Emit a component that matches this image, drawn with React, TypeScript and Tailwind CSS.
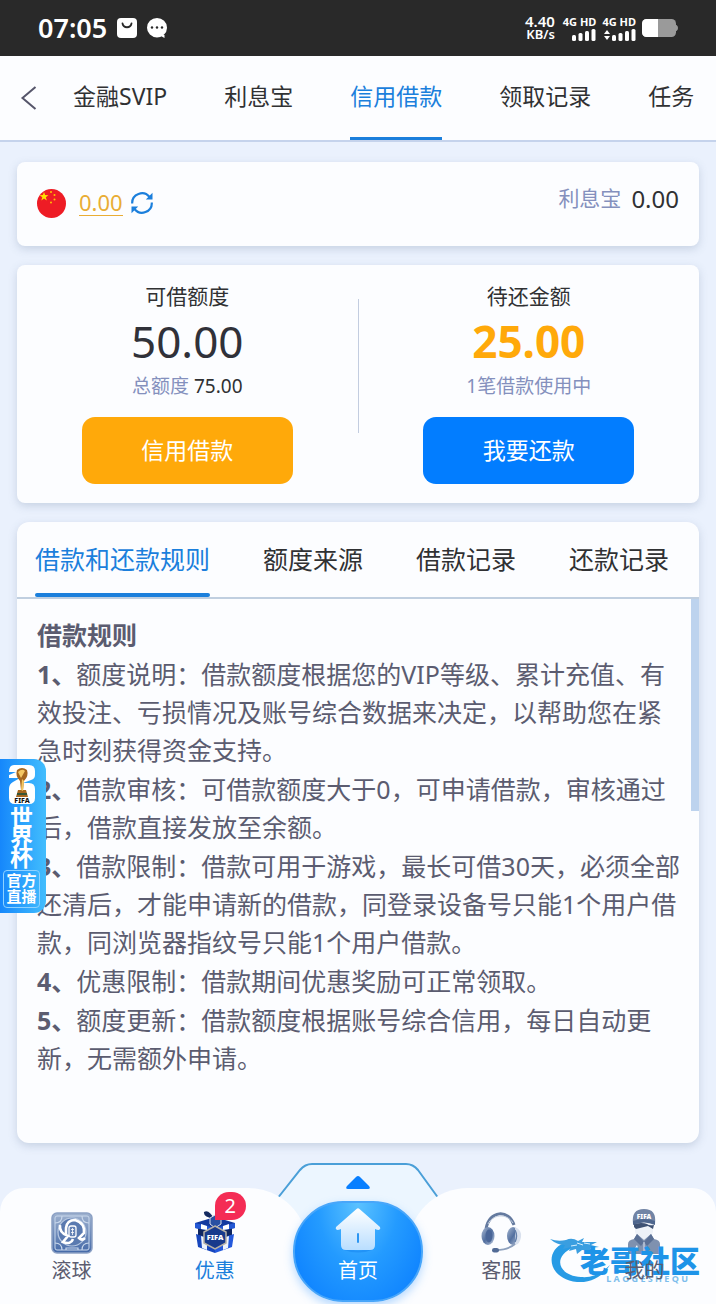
import React from 'react';

const headerTabs = ['金融SVIP', '利息宝', '信用借款', '领取记录', '任务'];
const ruleTabs = ['借款和还款规则', '额度来源', '借款记录', '还款记录'];
const rules = [
  '额度说明：借款额度根据您的VIP等级、累计充值、有效投注、亏损情况及账号综合数据来决定，以帮助您在紧急时刻获得资金支持。',
  '借款审核：可借款额度大于0，可申请借款，审核通过后，借款直接发放至余额。',
  '借款限制：借款可用于游戏，最长可借30天，必须全部还清后，才能申请新的借款，同登录设备号只能1个用户借款，同浏览器指纹号只能1个用户借款。',
  '优惠限制：借款期间优惠奖励可正常领取。',
  '额度更新：借款额度根据账号综合信用，每日自动更新，无需额外申请。',
];

function Signal({ arrows = false }: { arrows?: boolean }) {
  return (
    <div className="flex flex-col items-end gap-px">
      <span className="text-[11px] leading-[13px] font-bold whitespace-nowrap">4G HD</span>
      <svg width="32" height="12" viewBox="0 0 32 12" fill="#fff">
        {arrows && <path d="M0 5 3 1 6 5ZM0 7h6L3 11Z" />}
        <rect x="8" y="6" width="4" height="6" rx="1.5" />
        <rect x="14.500" y="4" width="4" height="8" rx="1.500" />
        <rect x="21" y="2" width="4" height="10" rx="1.500" />
        <rect x="27.500" y="0" width="4" height="12" rx="1.500" />
      </svg>
    </div>
  );
}

function StatusBar() {
  return (
    <div className="flex h-14 items-center bg-[#292929] px-[38px] text-white">
      <span className="text-[27px] leading-8 font-semibold">07:05</span>
      <svg className="ml-[10px]" width="20" height="20" viewBox="0 0 20 20">
        <rect width="20" height="20" rx="4" fill="#fff" />
        <path d="M5.500 5.500c1 5 8 5 9 0" fill="none" stroke="#292929" strokeWidth="1.800" strokeLinecap="round" />
      </svg>
      <svg className="ml-[10px]" width="20" height="20" viewBox="0 0 20 20">
        <path d="M10 0a10 9.700 0 1 1 0 19.400A10 9.700 0 0 1 10 0Z" fill="#fff" />
        <path d="M12 17h5.500v3Z" fill="#fff" />
        <g fill="#292929"><circle cx="5" cy="9.500" r="1.200" /><circle cx="10" cy="9.500" r="1.200" /><circle cx="15" cy="9.500" r="1.200" /></g>
      </svg>
      <div className="ml-auto flex flex-col items-end font-semibold">
        <span className="text-[15px] leading-[13px]">4.40</span>
        <span className="text-[13px] leading-[13px]">KB/s</span>
      </div>
      <div className="ml-2 flex gap-[6px]">
        <Signal />
        <Signal arrows />
      </div>
      <svg className="ml-[6px]" width="36" height="18" viewBox="0 0 36 18">
        <path d="M33.500 6h1q1.500 1 1.500 3t-1.500 3h-1Z" fill="#9a9a9a" />
        <rect width="34" height="18" rx="4.500" fill="#9a9a9a" />
        <path d="M4.500 0H16v18H4.500A4.500 4.500 0 0 1 0 13.500v-9A4.500 4.500 0 0 1 4.500 0Z" fill="#fff" />
      </svg>
    </div>
  );
}

function Header() {
  return (
    <header className="flex h-[86px] border-b-2 border-[#c5d3ec] bg-[#fcfdff]">
      <button aria-label="返回" className="flex w-[73px] shrink-0 items-center pl-5">
        <svg width="18" height="24" viewBox="0 0 18 24" fill="none" stroke="#55556a" strokeWidth="2">
          <path d="M15.500 1 2.500 12l13 11" />
        </svg>
      </button>
      <nav className="flex min-w-0 flex-1 gap-[57px] overflow-hidden">
        {headerTabs.map((tab, i) => (
          <a
            key={tab}
            href="#"
            className={
              i === 2
                ? 'flex shrink-0 items-center border-b-[3px] border-[#1b7fdc] text-[23px] text-[#1b7fdc]'
                : 'flex shrink-0 items-center border-b-[3px] border-transparent text-[23px] text-[#303133]'
            }
          >
            {tab}
          </a>
        ))}
      </nav>
    </header>
  );
}

function ChinaFlag() {
  return (
    <svg width="29" height="29" viewBox="0 0 29 29">
      <circle cx="14.500" cy="14.500" r="14.500" fill="#ee1c25" />
      <path d="m7 3 1.100 3.100 3.300.1-2.600 2 1 3.200L7 9.500l-2.700 1.900 1-3.200-2.700-2 3.300-.1Z" fill="#ffde00" />
      <g fill="#ffc400"><circle cx="14" cy="3" r="1" /><circle cx="17.500" cy="6" r="1" /><circle cx="17.500" cy="10.500" r="1" /><circle cx="14" cy="13.500" r="1" /></g>
    </svg>
  );
}

function BalanceCard() {
  return (
    <section className="flex h-[84px] items-center rounded-lg bg-[#fcfdff] px-5 pb-[2px] shadow-[0_3px_8px_rgba(120,140,170,0.3)]">
      <ChinaFlag />
      <span className="ml-[13px] border-b border-[#e9ad35] text-[22px] leading-[25px] text-[#e9ad35]">0.00</span>
      <button aria-label="刷新余额" className="ml-2">
        <svg width="22" height="22" viewBox="0 0 22 22" fill="none" stroke="#1b7fdc" strokeWidth="2.200">
          <path d="M1.200 11.500A9.700 9.700 0 0 1 18.500 5M20.800 10.500A9.700 9.700 0 0 1 3.500 17" />
          <path d="M21.500.800v6.700h-6.700ZM.500 21.200v-6.700h6.700Z" fill="#1b7fdc" stroke="none" />
        </svg>
      </button>
      <div className="mb-2 ml-auto flex items-center gap-[10px]">
        <span className="text-[21px] text-[#8490bd]">利息宝</span>
        <span className="text-[24px] leading-8 text-[#303133]">0.00</span>
      </div>
    </section>
  );
}

function LoanCard() {
  return (
    <section className="mt-[19px] flex h-[238px] rounded-lg bg-[#fcfdff] pt-[18px] shadow-[0_3px_8px_rgba(120,140,170,0.3)]">
      <div className="flex flex-1 flex-col items-center">
        <h2 className="text-[21px] leading-[26px] text-[#303133]">可借额度</h2>
        <p className="text-[44px] leading-[65px] text-[#303139]">50.00</p>
        <p className="text-[19px] leading-6 text-[#303133]">
          <span className="text-[#8490bd]">总额度</span> 75.00
        </p>
        <button className="mt-[19px] h-[67px] w-[211px] rounded-[13px] bg-[#ffa90a] text-[23px] text-white">信用借款</button>
      </div>
      <div className="mt-4 h-[134px] w-px bg-[#c3cde0]" />
      <div className="flex flex-1 flex-col items-center">
        <h2 className="text-[21px] leading-[26px] text-[#303133]">待还金额</h2>
        <p className="text-[44px] leading-[65px] font-bold text-[#ffa90a]">25.00</p>
        <p className="text-[19px] leading-6 text-[#8490bd]">1笔借款使用中</p>
        <button className="mt-[19px] h-[67px] w-[211px] rounded-[13px] bg-[#027dff] text-[23px] text-white">我要还款</button>
      </div>
    </section>
  );
}

function RulesCard() {
  return (
    <section className="mt-[19px] rounded-xl bg-[#fcfdff] pb-[66px] shadow-[0_3px_8px_rgba(120,140,170,0.3)]">
      <nav className="flex h-[77px] gap-[53px] border-b-2 border-[#c0cfe0] pl-[18px]">
        {ruleTabs.map((tab, i) => (
          <button
            key={tab}
            className={
              i === 0
                ? 'relative shrink-0 text-[25px] text-[#1b7fdc] after:absolute after:inset-x-0 after:bottom-0 after:h-1 after:rounded-sm after:bg-[#1b7fdc]'
                : 'shrink-0 text-[25px] text-[#303133]'
            }
          >
            {tab}
          </button>
        ))}
      </nav>
      <div className="relative pt-[17px] pr-[17px] pl-5 text-[25px] leading-[38px] text-[#5b5c70]">
        <div className="absolute top-0 right-0 h-[212px] w-2 bg-[#bdd3ee]" />
        <h3 className="font-bold">借款规则</h3>
        {rules.map((rule, i) => (
          <p key={rule} className="mt-px">
            <b>{i + 1}、</b>
            {rule}
          </p>
        ))}
      </div>
    </section>
  );
}

function WorldCupTag() {
  return (
    <a
      href="#"
      className="absolute top-[759px] left-0 flex h-[154px] w-[46px] flex-col items-center rounded-r-xl bg-linear-to-r from-[#1687fb] to-[#42bdfd] pt-[6px] pr-[3px] text-white"
    >
      <svg width="28" height="40" viewBox="0 0 28 40">
        <path d="M6 0h15q6 0 6 6v4q0 4-4 5l-8 3h6q6 0 6 6v9q0 6-6 6H7q-6 0-6-6V24q0-5 4-7l7-4H1v-3l7-3H1q0-7 5-7Z" fill="#fff" />
        <path d="M9 5q5-4 10 0 2 6-3 11l-1 9h3l2 7H8l2-7h3l-1-9Q7 11 9 5Z" fill="#a5661f" />
        <path d="M10 7q4-4 7-1l-4 7ZM14 14l2 2-1 10-2-1Z" fill="#f4c763" />
        <path d="M9 28h10v2H9Z" fill="#375536" />
        <text x="14" y="38" textAnchor="middle" fontSize="7" fontWeight="800" fill="#111">FIFA</text>
      </svg>
      <span className="mt-[2px] w-6 text-center text-[23px] leading-[20px] font-bold">世界杯</span>
      <span className="mt-[3px] rounded-sm border border-[#8ed2ff] px-[2px] pt-px pb-[3px] text-center text-[15px] leading-4 font-bold">
        官方
        <br />
        直播
      </span>
    </a>
  );
}

function BallIcon() {
  return (
    <svg width="42" height="42" viewBox="0 0 42 42">
      <defs>
        <linearGradient id="ball" x1="0" y1="0" x2="0" y2="1">
          <stop offset="0" stopColor="#9fb2cf" />
          <stop offset="1" stopColor="#4469a8" />
        </linearGradient>
      </defs>
      <rect x="1" y="1" width="40" height="40" rx="5" fill="url(#ball)" stroke="#8ca1c5" strokeWidth="1.500" />
      <rect x="4" y="4" width="34" height="34" rx="2" fill="none" stroke="#c9d8ec" />
      <path d="M4 11q7 0 7-7M38 11q-7 0-7-7M4 31q7 0 7 7M38 31q-7 0-7 7M15 38v-2h12v2" fill="none" stroke="#c9d8ec" strokeWidth="1.200" />
      <circle cx="21" cy="20" r="14" fill="#5a7ab0" stroke="#b9cae3" strokeWidth="1.200" />
      <path d="M9 13q-1 8 8 11l-5 6q8 3 10-3M15 24V16q1-8 9-8 10 3 9 13l-5 5q3 3 6 0" fill="none" stroke="#fff" strokeWidth="2.600" />
      <rect x="18" y="14" width="7" height="11" rx="2" fill="#6482b5" stroke="#fff" strokeWidth="1.300" />
      <path d="M20 17.500h3M20 20.500h3M21.500 16v7" stroke="#fff" strokeWidth=".8" />
    </svg>
  );
}

function GiftIcon() {
  return (
    <svg width="42" height="44" viewBox="0 0 42 44">
      <path d="M4 17h34v10H4Z" fill="#10265f" />
      <path d="m2 24 19 6v13L4 37Z" fill="#1746bd" />
      <path d="m40 24-19 6v13l17-6Z" fill="#2459dc" />
      <path d="m7 26 6 2v12l-5-2ZM35 26l-6 2v12l5-2Z" fill="#eef3fc" />
      <path d="m1 13 20-6 20 6v5l-20 4-20-4Z" fill="#133a9f" />
      <path d="m1 13 20 5v4L1 18ZM41 13l-20 5v4l20-4Z" fill="#2358d5" />
      <path d="m7 14 6 2v4l-6-1ZM35 14l-6 2v4l6-1Z" fill="#fff" />
      <path d="M20 9q-11-2-10-7 5-3 10 7Z" fill="#132a60" />
      <path d="m21 5 6 3v6l-6 4-5-4V8Z" fill="#2850a2" stroke="#dbdfe8" />
      <path d="m21 16 11 6v11l-11 6-11-6V22Z" fill="#183a8c" stroke="#b7b1a6" strokeWidth="1.500" />
      <text x="21" y="30" textAnchor="middle" fontSize="7.500" fontWeight="900" fill="#fff">FIFA</text>
    </svg>
  );
}

function HeadsetIcon() {
  return (
    <svg width="42" height="42" viewBox="0 0 42 42">
      <defs>
        <linearGradient id="pad" x1="0" y1="0" x2="1" y2="1">
          <stop offset="0" stopColor="#a9b9d2" />
          <stop offset=".5" stopColor="#526f9f" />
          <stop offset="1" stopColor="#b9c7dd" />
        </linearGradient>
      </defs>
      <path d="M6 17C9-2 29-3 34 13" fill="none" stroke="#647a9f" strokeWidth="3" />
      <path d="M8 12C12 3 26 0 33 11" fill="none" stroke="#c3cfdf" strokeWidth="1" />
      <ellipse cx="8" cy="24" rx="6.500" ry="9" fill="url(#pad)" />
      <ellipse cx="9" cy="24" rx="3.500" ry="6.500" fill="#4a6698" />
      <ellipse cx="33" cy="24" rx="6" ry="9" fill="url(#pad)" />
      <path d="M35 15q7 3 6 10t-6 8Z" fill="#d9e1ee" />
      <path d="M35 18q3 6 0 12" fill="none" stroke="#6480ab" strokeWidth="1.500" />
      <path d="M35 32q-7 6-19 6" fill="none" stroke="#8da0bd" strokeWidth="1.800" />
      <rect x="12" y="36" width="7" height="4.500" rx="2.200" fill="#526b96" />
    </svg>
  );
}

function PersonIcon() {
  return (
    <svg width="42" height="46" viewBox="0 0 42 46">
      <path d="M12 15h18v9q-2 8-9 8t-9-8Z" fill="#eef2f8" />
      <path d="M11 16q8-2 13 0 2 2 7 1l-1 4-5-3-12 3-2-2Z" fill="#3f5274" />
      <path d="M10 16Q8 1 21 1t11 15q-11-5-22 0Z" fill="#7184a5" />
      <path d="M10 13q11-4 22 0v4q-11-5-22 0Z" fill="#4e668e" />
      <path d="M5 46V36q0-4 6-5l3-5 7 6 7-6 3 5q6 1 6 5v10Z" fill="#7f91af" />
      <path d="m14 26 7 8-3 4-7-7ZM28 26l-7 8 3 4 7-7Z" fill="#5b7095" />
      <path d="M21 34v12" stroke="#dbe3ef" />
      <path d="m14 37-2 3h3Z" fill="#fff" />
      <text x="21" y="11" textAnchor="middle" fontSize="6.500" fontWeight="900" fill="#fff">FIFA</text>
    </svg>
  );
}

function CommunityMark() {
  return (
    <div className="pointer-events-none absolute right-4 bottom-[22px] flex h-[46px] w-[150px] flex-col items-end justify-end">
      <svg className="absolute top-0 left-0" width="64" height="48" viewBox="0 0 64 48">
        <path d="M14 6C-6 14-2 42 27 45c15 1 26-6 33-17-9 9-18 13-29 12C9 39 1 20 24 10Z" fill="#279be5" />
        <path d="M0 2q8 3 16 1 6-3 12 1l6-3-2 4 15 0-6 3 8 2-9 1 5 3-13-1-5 4-1-5-7 2 2-4-8 2 2-4Q7 8 0 2Z" fill="#3a9ee0" />
        <path d="m27 6 6 2M21 9l6-1M34 6l6 1" stroke="#d9f0ff" strokeWidth="1" />
      </svg>
      <span className="relative text-[30px] leading-[26px] font-black text-[#1e94e8]">老哥社区</span>
      <span className="relative mr-3 text-[9px] leading-[9px] font-bold text-[#7dbdec]">L A O G E S H E Q U</span>
    </div>
  );
}

const itemClass = 'flex flex-col items-center justify-end gap-[3px] pb-5 text-[20px] leading-[28px] text-[#5b5c70]';

function BottomNav() {
  return (
    <nav className="relative mt-auto h-[142px]">
      <svg className="absolute top-0 left-1/2 -translate-x-1/2" width="170" height="80" viewBox="0 0 170 80">
        <path d="M4 36 27 7q5-6 12-6h94q7 0 12 6l21 29v44H4Z" fill="#ecf6ff" />
        <path d="M4 36 27 7q5-6 12-6h94q7 0 12 6l21 29" fill="none" stroke="#4a9fd8" strokeWidth="2" />
      </svg>
      <div className="absolute bottom-0 left-0 h-[117px] w-[43%] rounded-tl-[24px] rounded-tr-[60px] bg-[#fcfdff]" />
      <div className="absolute right-0 bottom-0 h-[117px] w-[43%] rounded-tl-[60px] rounded-tr-[24px] bg-[#fcfdff]" />
      <div className="absolute bottom-0 left-[40%] h-[50px] w-[20%] bg-[#fcfdff]" />
      <div className="relative grid h-full grid-cols-5">
        <a href="#" className={itemClass}>
          <BallIcon />
          滚球
        </a>
        <a href="#" className="relative flex flex-col items-center justify-end gap-[3px] pb-5 text-[20px] leading-[28px] text-[#1b7fdc]">
          <GiftIcon />
          优惠
          <span className="absolute top-[29px] left-1/2 flex h-[28px] w-[31px] items-center justify-center rounded-t-[14px] rounded-br-[14px] bg-[#f42c55] text-[20px] text-white">
            2
          </span>
        </a>
        <a href="#" className="relative flex flex-col items-center text-[20px] leading-[28px] text-white">
          <svg className="mt-[13px]" width="24" height="14" viewBox="0 0 24 14">
            <path d="M12 0q1 0 2 1l9 9q2 3-1 3H2q-3 0-1-3l9-9q1-1 2-1Z" fill="#087fff" />
          </svg>
          <span className="mt-[11px] flex h-[101px] w-[130px] flex-col items-center rounded-[50px] border-2 border-[#48a6fa] bg-[radial-gradient(ellipse_at_50%_0%,#5bc2ff_0%,#249bff_45%,#087cff_100%)] pt-1 shadow-[0_4px_10px_rgba(50,150,255,0.35)]">
            <svg width="48" height="46" viewBox="0 0 48 46">
              <defs>
                <linearGradient id="house" x1="0" y1="0" x2="0" y2="1">
                  <stop offset="0" stopColor="#fff" />
                  <stop offset="1" stopColor="#b9deff" />
                </linearGradient>
              </defs>
              <path d="M10 39q14 9 28 0v4q-14 5-28 0Z" fill="#0876e8" opacity=".35" />
              <path d="M22.500 2q1.500-1.500 3 0L46 20q1 2-1 3-2 0-4-1v16q0 5-5 5H12q-5 0-5-5V22q-2 1-4 1-2-1-1-3Z" fill="url(#house)" />
              <path d="M24 27v8" stroke="#2c96f2" strokeWidth="2" strokeLinecap="round" />
            </svg>
            <span className="mt-1">首页</span>
          </span>
        </a>
        <a href="#" className={itemClass}>
          <HeadsetIcon />
          客服
        </a>
        <a href="#" className={itemClass}>
          <PersonIcon />
          <span className="relative z-10">我的</span>
        </a>
      </div>
      <CommunityMark />
    </nav>
  );
}

export default function App() {
  return (
    <div className="relative flex min-h-screen flex-col overflow-hidden bg-[#eaf1fd] font-['Noto_Sans','Noto_Sans_CJK_SC',sans-serif]">
      <StatusBar />
      <Header />
      <main className="px-[17px] pt-5 pb-5">
        <BalanceCard />
        <LoanCard />
        <RulesCard />
      </main>
      <WorldCupTag />
      <BottomNav />
    </div>
  );
}
